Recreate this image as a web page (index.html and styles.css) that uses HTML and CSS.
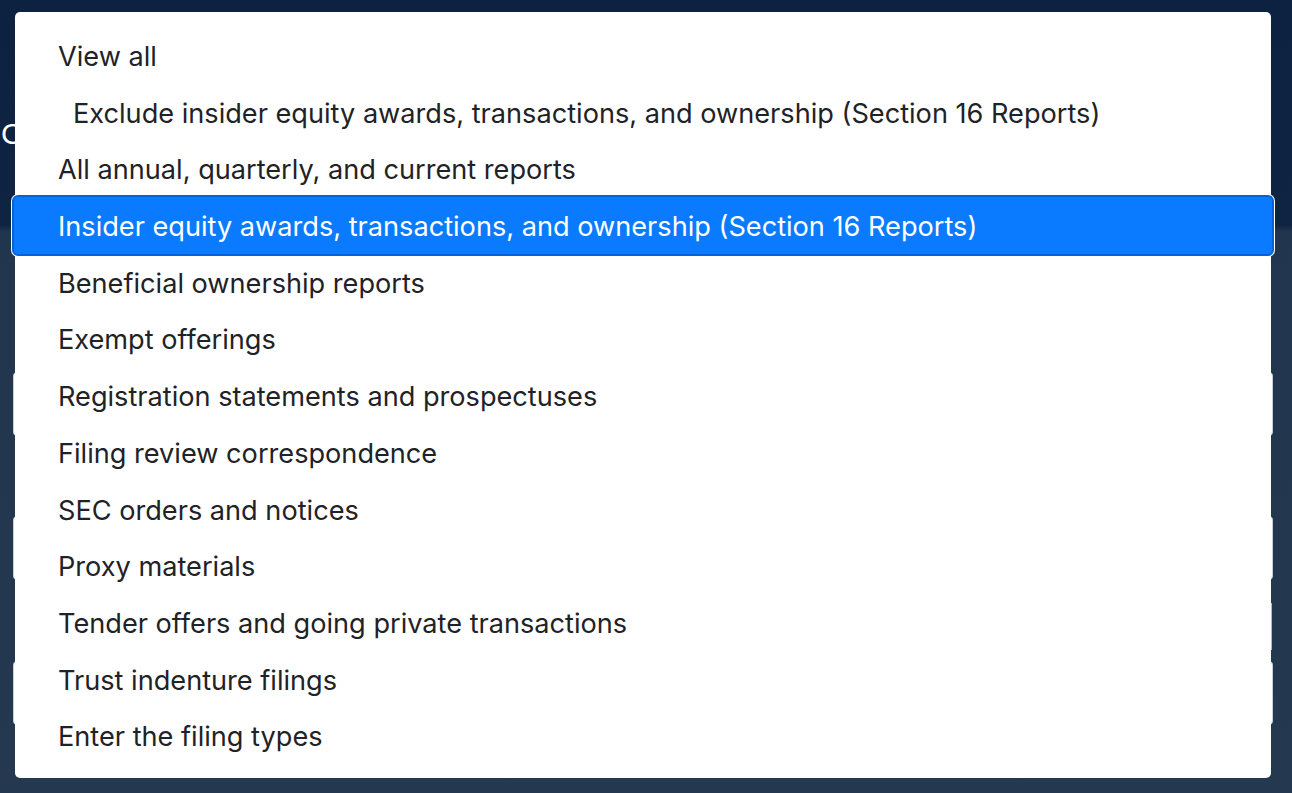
FILE: index.html
```html
<!DOCTYPE html>
<html lang="en">
<head>
<meta charset="utf-8">
<title>Filing types</title>
<link rel="stylesheet" href="styles.css">
</head>
<body>
<div class="backdrop">
  <span class="bg-label">Co</span>
  <span class="bg-field f1"></span>
  <span class="bg-field f2"></span>
  <span class="bg-field f3"></span>
  <span class="bg-accent"></span>
</div>
<ul class="menu">
  <li class="item">View all</li>
  <li class="item indent">Exclude insider equity awards, transactions, and ownership (Section 16 Reports)</li>
  <li class="item">All annual, quarterly, and current reports</li>
  <li class="item selected">Insider equity awards, transactions, and ownership (Section 16 Reports)</li>
  <li class="item">Beneficial ownership reports</li>
  <li class="item">Exempt offerings</li>
  <li class="item">Registration statements and prospectuses</li>
  <li class="item">Filing review correspondence</li>
  <li class="item">SEC orders and notices</li>
  <li class="item">Proxy materials</li>
  <li class="item">Tender offers and going private transactions</li>
  <li class="item">Trust indenture filings</li>
  <li class="item">Enter the filing types</li>
</ul>
</body>
</html>
```
FILE: styles.css
```css
html, body {
  margin: 0;
  height: 100%;
}
body {
  background: linear-gradient(180deg, #0d2240 0px, #0f2442 225px, #21354e 232px, #24384f 793px);
  font-family: "Inter", "Liberation Sans", sans-serif;
  padding: 12px 0 0 15px;
  box-sizing: border-box;
  overflow: hidden;
  position: relative;
}
.backdrop {
  position: absolute;
  inset: 0;
  pointer-events: none;
}
.bg-label {
  position: absolute;
  left: 1px;
  top: 116px;
  color: #ffffff;
  font-size: 30px;
  line-height: 36px;
  font-family: "Liberation Sans", sans-serif;
}
.bg-field {
  position: absolute;
  left: 13px;
  width: 1258px;
  height: 62px;
  background: #ffffff;
  border: 1px solid #c9cdd2;
  border-radius: 4px;
}
.f1 { top: 372px; }
.f2 { top: 516px; }
.f3 { top: 661px; }
.bg-accent {
  position: absolute;
  left: 1269px;
  top: 603px;
  width: 3px;
  height: 47px;
  background: #f0b43a;
}
.menu {
  position: relative;
  list-style: none;
  margin: 0;
  width: 1256px;
  padding: 17px 0 12px;
  background: #ffffff;
  border-radius: 5px;
  box-sizing: border-box;
}
.item {
  position: relative;
  height: 56.7px;
  line-height: 56.7px;
  padding-left: 43px;
  font-size: 27.15px;
  color: #1f2226;
  white-space: nowrap;
}
.item.indent {
  padding-left: 58px;
}
.item.selected {
  color: #ffffff;
  z-index: 1;
  isolation: isolate;
}
.item.selected::before {
  content: "";
  position: absolute;
  left: -3px;
  right: -3px;
  top: -4px;
  bottom: 0;
  background: #0a7bff;
  border: 2px solid #0862d6;
  border-radius: 6px;
  box-shadow: 0 0 0 1px #ffffff;
  z-index: -1;
}
```
